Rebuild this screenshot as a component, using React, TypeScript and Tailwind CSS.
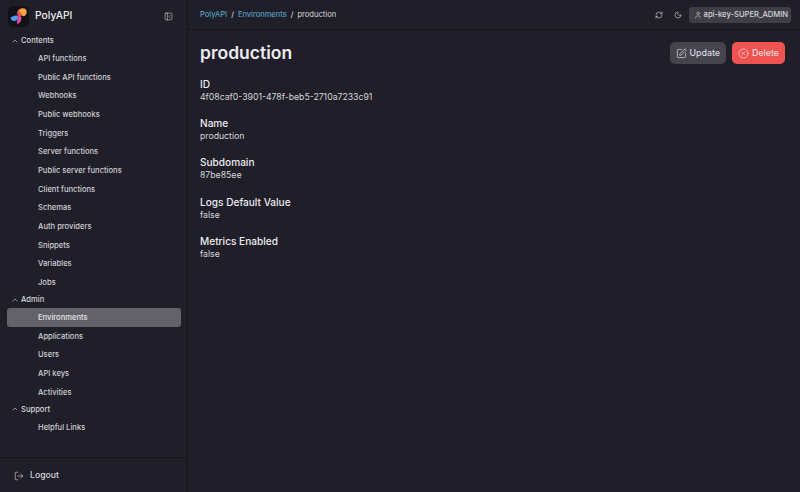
import { ChevronUp, PanelLeftClose, LogOut, RefreshCw, Moon, User, SquarePen, CircleX } from 'lucide-react';

const sections = [
  {
    title: 'Contents',
    items: ['API functions', 'Public API functions', 'Webhooks', 'Public webhooks', 'Triggers', 'Server functions', 'Public server functions', 'Client functions', 'Schemas', 'Auth providers', 'Snippets', 'Variables', 'Jobs'],
  },
  { title: 'Admin', items: ['Environments', 'Applications', 'Users', 'API keys', 'Activities'] },
  { title: 'Support', items: ['Helpful Links'] },
];

const fields = [
  { label: 'ID', value: '4f08caf0-3901-478f-beb5-2710a7233c91' },
  { label: 'Name', value: 'production' },
  { label: 'Subdomain', value: '87be85ee' },
  { label: 'Logs Default Value', value: 'false' },
  { label: 'Metrics Enabled', value: 'false' },
];

function Logo() {
  return (
    <div className="flex h-[21px] w-[21px] items-center justify-center rounded-[5px] bg-[#121118]">
      <svg viewBox="0 0 21 21" className="h-[21px] w-[21px]">
        <path d="M10 5 C11 2.5 15 1.5 17.5 3 C19.5 5 19 8.5 16.5 10 C15 10.5 13.5 9.5 13 8 C12.5 6.5 11 6 10 5 Z" fill="#f6a63c" />
        <path d="M9.5 5 C10.5 4 12.5 5.5 13.5 8 C14 10 12.5 11 11 10.5 C9.5 9.5 8.5 7 9.5 5 Z" fill="#ef4f5b" />
        <path d="M2.5 12 C4 9.5 9 8.5 10.5 10.5 C10.5 13 8.5 15 6 15 C4.5 15 3 14 2.5 12 Z" fill="#4a9bea" />
        <path d="M9.5 11 C10.5 9.5 13.5 10 13.5 12 C13.5 15 11.5 17.5 9 18 C8.5 16 10 13.5 9.5 11 Z" fill="#e2509a" />
      </svg>
    </div>
  );
}

export default function App() {
  return (
    <div className="flex h-[492px] w-[800px] overflow-hidden bg-[#201f29] font-['Inter',sans-serif] text-[#e6e6e9]">
      <aside className="flex w-[188px] shrink-0 flex-col border-r border-[#15141b]">
        <div className="flex h-[33px] items-center justify-between pb-[1px] pl-[8px] pr-[14px]">
          <div className="flex items-center gap-[6px]">
            <Logo />
            <span className="text-[10.3px] font-medium text-[#ececef]">PolyAPI</span>
          </div>
          <PanelLeftClose size={9} strokeWidth={1.6} className="text-[#c9c9ce]" />
        </div>
        <nav className="flex-1">
          {sections.map((section) => (
            <div key={section.title}>
              <div className="flex h-[16.5px] items-center gap-[2px] pb-[1px] pl-[11px] text-[7.6px] font-medium text-[#d6d6da]">
                <ChevronUp size={8} strokeWidth={1.8} />
                <span>{section.title}</span>
              </div>
              {section.items.map((item) => (
                <div
                  key={item}
                  className={
                    item === 'Environments'
                      ? 'ml-[7px] mr-[6px] flex h-[18.65px] items-center rounded-[3px] bg-[#63626b] pl-[31px] text-[7.6px] font-medium text-[#e4e4e7]'
                      : 'ml-[7px] mr-[6px] flex h-[18.65px] items-center pl-[31px] text-[7.6px] font-medium text-[#cfcfd4]'
                  }
                >
                  {item}
                </div>
              ))}
            </div>
          ))}
        </nav>
        <div className="flex h-[35px] items-center gap-[6px] border-t border-[#15141b] pt-[2px] pl-[14px] text-[8.7px] font-medium text-[#d6d6da]">
          <LogOut size={10} strokeWidth={1.5} />
          <span>Logout</span>
        </div>
      </aside>
      <main className="flex min-w-0 flex-1 flex-col">
        <header className="flex h-[30px] items-center justify-between border-b border-[#15141b] pl-[12px] pr-[9px]">
          <div className="flex items-center gap-[4px] text-[7.6px]">
            <span className="text-[#5eb3d6]">PolyAPI</span>
            <span>/</span>
            <span className="text-[#5eb3d6]">Environments</span>
            <span>/</span>
            <span className="text-[#d6d6da]">production</span>
          </div>
          <div className="flex items-center">
            <RefreshCw size={8} strokeWidth={1.8} className="mr-[11px] text-[#d6d6da]" />
            <Moon size={8} strokeWidth={1.8} className="mr-[7px] text-[#d6d6da]" />
            <div className="flex h-[16px] items-center gap-[2px] rounded-[3px] bg-[#3f3e47] pl-[5px] pr-[3px] text-[7.6px] font-medium text-[#d6d6da]">
              <User size={8} strokeWidth={1.6} />
              <span>api-key-SUPER_ADMIN</span>
            </div>
          </div>
        </header>
        <div className="flex-1 pl-[12px] pr-[15px] pt-[11px]">
          <div className="flex items-start justify-between">
            <h1 className="text-[17.5px] font-semibold leading-[24px] text-[#ececef]">production</h1>
            <div className="mt-[1px] flex gap-[6px]">
              <button className="flex h-[22px] items-center gap-[3px] rounded-[5px] bg-[#45444d] px-[6px] text-[8.8px] font-medium text-[#dcdce0]">
                <SquarePen size={11} strokeWidth={1.6} />
                Update
              </button>
              <button className="flex h-[22px] items-center gap-[3px] rounded-[5px] bg-[#ef5350] px-[6px] text-[8.8px] font-medium text-[#f7dcdc]">
                <CircleX size={11} strokeWidth={1.6} />
                Delete
              </button>
            </div>
          </div>
          <div className="mt-[12px] flex flex-col gap-[12px]">
            {fields.map((field) => (
              <div key={field.label}>
                <div className="text-[10.1px] font-medium leading-[14px] text-[#ececef]">{field.label}</div>
                <div className="text-[8.7px] leading-[13.2px] text-[#d6d6da]">{field.value}</div>
              </div>
            ))}
          </div>
        </div>
      </main>
    </div>
  );
}
